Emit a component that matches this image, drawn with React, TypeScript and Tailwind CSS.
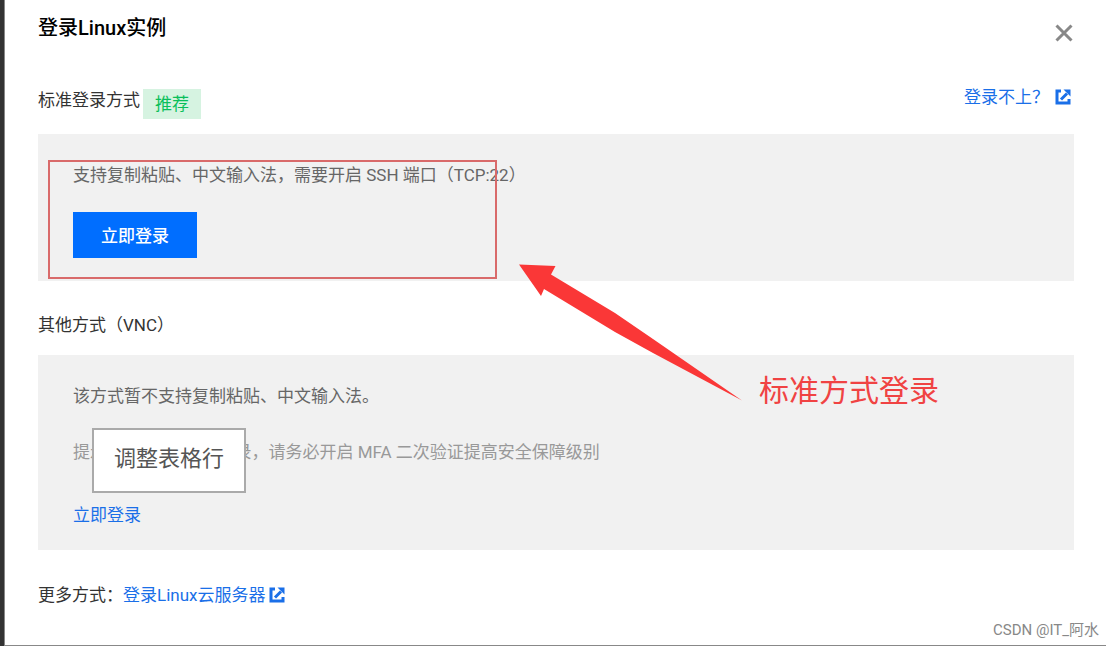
import type { ReactNode } from "react";

function ExternalIcon() {
  return (
    <svg viewBox="0 0 16 16" className="size-4 shrink-0" fill="none" stroke="#1a6fe8" strokeWidth="3" aria-hidden="true">
      <path d="M6 2H2v12h12v-4" />
      <path d="M6 10.5l6-6" />
      <path d="M8.5 0.5h7v7z" fill="#1a6fe8" stroke="none" />
    </svg>
  );
}

function Panel({ children }: { children: ReactNode }) {
  return <div className="relative bg-[#f1f1f1] px-[35px] text-[#666]">{children}</div>;
}

export default function App() {
  return (
    <div className="flex min-h-screen bg-white pr-[7px] font-['Roboto','Noto_Sans_CJK_SC',sans-serif] text-[17px] leading-6 text-[#333]">
      <div className="w-1 shrink-0 bg-[#333]" />

      <main className="relative flex-1 border-b border-l border-[#888] pr-8 pb-6 pl-[33px]">
        {/* Cabecera */}
        <header className="flex items-start justify-between pt-4">
          <h1 className="text-xl leading-6 font-medium text-black">登录Linux实例</h1>
          <button type="button" aria-label="关闭" className="mt-2 mr-px">
            <svg viewBox="0 0 18 18" className="size-[18px]" stroke="#888" strokeWidth="3" aria-hidden="true">
              <path d="M1.5 1.5l15 15M16.5 1.5l-15 15" />
            </svg>
          </button>
        </header>

        {/* Acceso estándar */}
        <section className="pt-[43px]">
          <div className="flex items-start justify-between pb-[15px]">
            <div className="flex items-start gap-[3px]">
              <h2 className="pt-[3px]">标准登录方式</h2>
              <span className="mt-1 bg-[#d6f3e1] px-3 py-[3px] text-[#0abf5b]">推荐</span>
            </div>
            <a href="#help" className="flex items-center gap-1.5 pr-[3px] text-[#1a6fe8]">
              登录不上？
              <ExternalIcon />
            </a>
          </div>
          <Panel>
            <p className="pt-[29px]">支持复制粘贴、中文输入法，需要开启 SSH 端口（TCP:22）</p>
            <div className="pt-[25px] pb-[23px]">
              <button type="button" className="block bg-[#006eff] px-7 pt-3 pb-2.5 font-medium text-white">
                立即登录
              </button>
            </div>
            {/* Marco rojo */}
            <div className="absolute top-[26px] left-[10px] h-[119px] w-[449px] border-2 border-[#d96a6a]" />
          </Panel>
        </section>

        {/* Acceso VNC */}
        <section className="pt-8">
          <h2 className="pb-[18px]">其他方式（VNC）</h2>
          <Panel>
            <p className="pt-[29px]">该方式暂不支持复制粘贴、中文输入法。</p>
            <p className="pt-8 text-[#999]">提示：如使用 VNC 登录，请务必开启 MFA 二次验证提高安全保障级别</p>
            <a href="#vnc" className="mt-[39px] inline-block pb-[23px] text-[#1a6fe8]">
              立即登录
            </a>
            <div role="tooltip" className="absolute top-[73px] left-[54px] border-2 border-[#aaa] bg-white px-5 pt-[14px] pb-[18px] text-[22px] leading-[29px] text-[#555]">
              调整表格行
            </div>
          </Panel>
        </section>

        <footer className="flex items-center pt-[33px]">
          更多方式：
          <a href="#docs" className="flex items-center gap-1 text-[#1a6fe8]">
            登录Linux云服务器
            <ExternalIcon />
          </a>
        </footer>

        {/* Flecha y nota */}
        <svg viewBox="0 0 224 138" className="absolute top-[264px] left-[514px] h-[138px] w-[224px]" fill="#fa3737" aria-hidden="true">
          <path d="M0 0.5L36.5 2L32 10.5L96 49L134 75L223 136.5L134 89L96 68L25 25L22 32Z" />
        </svg>
        <p className="absolute top-[371px] left-[754px] text-[30px] leading-10 text-[#f04343]">标准方式登录</p>
      </main>

      <p className="absolute right-[14px] bottom-1.5 text-[15px] leading-5 text-[#888]">CSDN @IT_阿水</p>
    </div>
  );
}
